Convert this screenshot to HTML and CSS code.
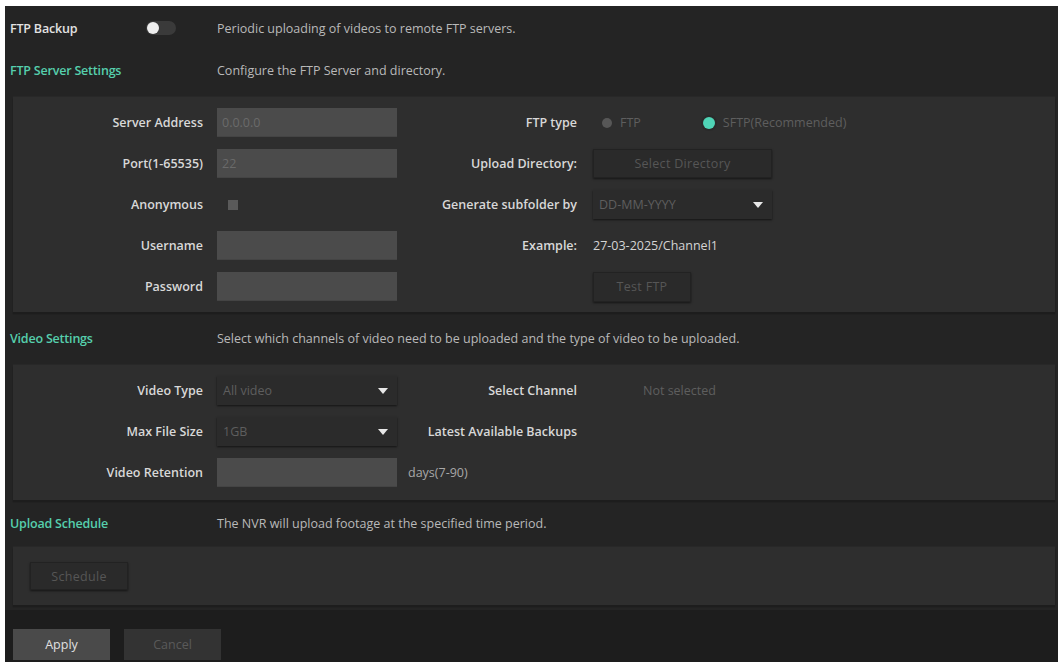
FILE: index.html
```html
<!DOCTYPE html>
<html lang="en">
<head>
<meta charset="utf-8">
<title>FTP Backup</title>
<link rel="stylesheet" href="styles.css">
</head>
<body>
<div class="app">
  <div class="head head-first">
    <div class="head-title plain">FTP Backup</div>
    <div class="head-toggle"><span class="toggle"><span class="knob"></span></span></div>
    <div class="head-desc">Periodic uploading of videos to remote FTP servers.</div>
  </div>
  <div class="head head-2">
    <div class="head-title">FTP Server Settings</div>
    <div class="head-desc">Configure the FTP Server and directory.</div>
  </div>
  <div class="panel panel-ftp">
    <div class="grid">
      <div class="lbl">Server Address</div>
      <div class="input"><span class="faint">0.0.0.0</span></div>
      <div class="lbl lbl-r">FTP type</div>
      <div class="radios">
        <span class="radio"></span><span class="faint rtext">FTP</span>
        <span class="radio on"></span><span class="faint rtext">SFTP(Recommended)</span>
      </div>

      <div class="lbl">Port(1-65535)</div>
      <div class="input"><span class="faint">22</span></div>
      <div class="lbl lbl-r">Upload Directory:</div>
      <div class="ctl"><span class="btn btn-dir">Select Directory</span></div>

      <div class="lbl">Anonymous</div>
      <div class="ctl"><span class="check"></span></div>
      <div class="lbl lbl-r">Generate subfolder by</div>
      <div class="ctl"><span class="select sel-wide"><span class="faint">DD-MM-YYYY</span><span class="arrow"></span></span></div>

      <div class="lbl">Username</div>
      <div class="input"></div>
      <div class="lbl lbl-r">Example:</div>
      <div class="ctl"><span class="value">27-03-2025/Channel1</span></div>

      <div class="lbl">Password</div>
      <div class="input"></div>
      <div class="lbl lbl-r"></div>
      <div class="ctl"><span class="btn btn-test">Test FTP</span></div>
    </div>
  </div>

  <div class="head head-3">
    <div class="head-title">Video Settings</div>
    <div class="head-desc">Select which channels of video need to be uploaded and the type of video to be uploaded.</div>
  </div>
  <div class="panel panel-video">
    <div class="grid">
      <div class="lbl">Video Type</div>
      <div class="ctl"><span class="select"><span class="faint">All video</span><span class="arrow"></span></span></div>
      <div class="lbl lbl-r">Select Channel</div>
      <div class="ctl"><span class="faint notsel">Not selected</span></div>

      <div class="lbl">Max File Size</div>
      <div class="ctl"><span class="select"><span class="faint">1GB</span><span class="arrow"></span></span></div>
      <div class="lbl lbl-r">Latest Available Backups</div>
      <div class="ctl"></div>

      <div class="lbl">Video Retention</div>
      <div class="input"></div>
      <div class="ctl"><span class="days">days(7-90)</span></div>
      <div class="ctl"></div>
    </div>
  </div>

  <div class="head head-4">
    <div class="head-title">Upload Schedule</div>
    <div class="head-desc">The NVR will upload footage at the specified time period.</div>
  </div>
  <div class="panel panel-sched">
    <span class="btn btn-sched">Schedule</span>
  </div>

  <div class="footer">
    <span class="fbtn apply">Apply</span>
    <span class="fbtn cancel">Cancel</span>
  </div>
</div>
</body>
</html>
```

FILE: styles.css
```css
html, body {
  margin: 0;
  padding: 0;
  background: #ffffff;
}
body {
  font-family: "Open Sans", "Liberation Sans", sans-serif;
  font-size: 12.5px;
  color: #d6d6d6;
}
.app {
  margin: 6px 4px 0 5px;
  height: 656px;
  background: #242424;
  display: flex;
  flex-direction: column;
  overflow: hidden;
}
.head {
  display: flex;
  align-items: center;
  padding-left: 5px;
  flex: none;
}
.head-first { height: 44px; }
.head-2 { height: 41px; padding-bottom: 6px; }
.head-3 { height: 53px; }
.head-4 { height: 47px; }
.head-title {
  width: 207px;
  flex: none;
  color: #56cfad;
  font-weight: 600;
  letter-spacing: -0.2px;
}
.head-title.plain {
  color: #e2e2e2;
  width: 136px;
}
.head-toggle {
  width: 71px;
  flex: none;
  display: flex;
  align-items: center;
}
.toggle {
  width: 30px;
  height: 14px;
  border-radius: 7px;
  background: #3a3a3a;
  display: flex;
  align-items: center;
  padding-left: 1px;
  box-sizing: border-box;
}
.knob {
  width: 12px;
  height: 12px;
  border-radius: 50%;
  background: #eeeeee;
}
.head-desc {
  color: #b9b9b9;
}
.panel {
  margin: 0 3px 0 8px;
  background: #2e2e2e;
  box-shadow: 0 2px 1px #1d1d1d, 0 -1px 0 #282828;
  flex: none;
}
.panel-ftp { padding: 11px 0 11px; }
.panel-video { padding: 11px 0 13px; }
.panel-sched {
  padding: 15px 0 15px 17px;
  height: 28px;
}
.grid {
  display: grid;
  grid-template-columns: 204px 180px 196px 300px;
  grid-auto-rows: 29px;
  row-gap: 12px;
}
.lbl {
  display: flex;
  align-items: center;
  justify-content: flex-end;
  padding-right: 14px;
  color: #d8d8d8;
  font-weight: 600;
  white-space: nowrap;
}
.lbl-r { padding-right: 16px; }
.ctl {
  display: flex;
  align-items: center;
}
.input {
  background: #4b4b4b;
  display: flex;
  align-items: center;
  padding-left: 5px;
  box-shadow: inset 0 -1px 0 #444;
}
.faint {
  color: #5e5e5e;
}
.input .faint { color: #6a6a6a; }
.radios {
  display: flex;
  align-items: center;
}
.radio {
  width: 10px;
  height: 10px;
  border-radius: 50%;
  background: #575757;
  margin-left: 9px;
  flex: none;
}
.radio.on {
  width: 12px;
  height: 12px;
  background: #4fd4b6;
  margin-left: 62px;
  box-shadow: 0 0 0 2px #2a2a2a;
}
.rtext { margin-left: 8px; }
.btn {
  background: #2a2a2a;
  border: 1px solid #222;
  box-shadow: 0 1px 2px rgba(0,0,0,0.55);
  color: #565656;
  display: flex;
  align-items: center;
  justify-content: center;
  box-sizing: border-box;
  letter-spacing: 0.3px;
}
.btn-dir { width: 179px; height: 29px; }
.btn-test { width: 98px; height: 30px; }
.btn-sched { width: 98px; height: 28px; }
.check {
  width: 10px;
  height: 10px;
  background: #5a5a5a;
  margin-left: 11px;
}
.select {
  width: 180px;
  height: 29px;
  box-sizing: border-box;
  background: #2b2b2b;
  box-shadow: 0 1px 2px rgba(0,0,0,0.6);
  display: flex;
  align-items: center;
  justify-content: space-between;
  padding: 0 9px 0 6px;
}
.sel-wide { width: 179px; }
.arrow {
  width: 0;
  height: 0;
  border-left: 5px solid transparent;
  border-right: 5px solid transparent;
  border-top: 6px solid #e8e8e8;
}
.value {
  color: #d4d4d4;
}
.notsel { margin-left: 50px; }
.days {
  color: #a8a8a8;
  margin-left: 11px;
}
.footer {
  flex: 1;
  background: #1d1d1d;
  margin-top: 5px;
  padding: 19px 0 0 8px;
  display: flex;
  align-items: flex-start;
  gap: 14px;
}
.fbtn {
  width: 97px;
  height: 31px;
  display: flex;
  align-items: center;
  justify-content: center;
}
.apply {
  background: #4a4a4a;
  color: #e0e0e0;
}
.cancel {
  background: #333333;
  color: #5a5a5a;
}
```
